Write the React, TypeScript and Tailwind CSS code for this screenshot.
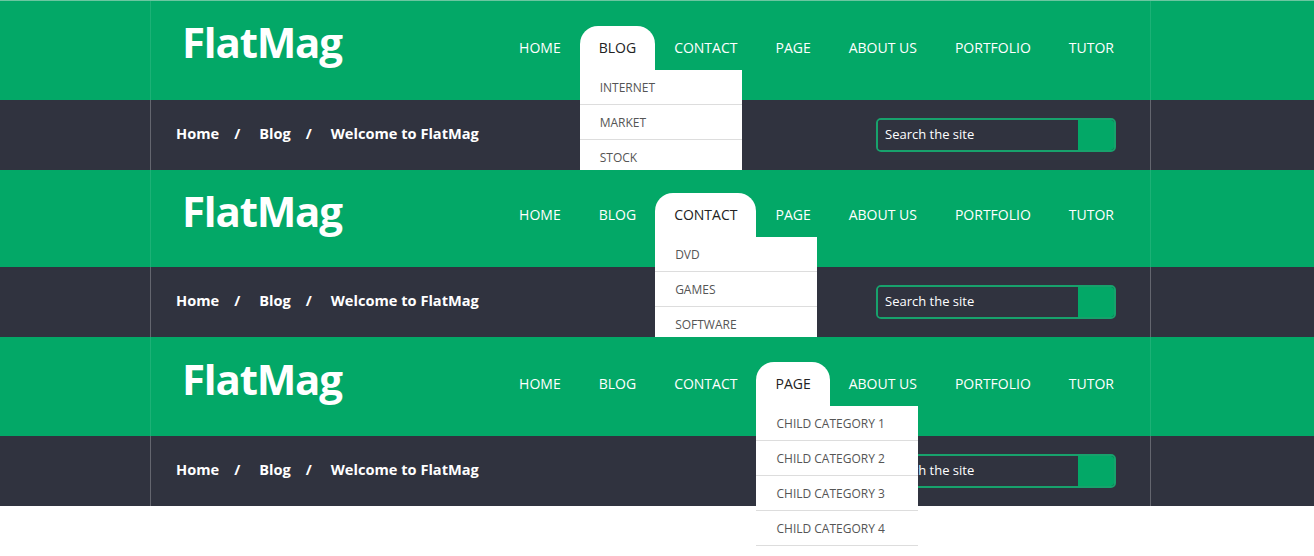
import React from "react";

const navItems = ['Home', 'Blog', 'Contact', 'Page', 'About us', 'Portfolio', 'Tutor']

interface HeaderProps {
    active: string
    subItems: string[]
    greenClass: string
    logoClass: string
    navClass: string
    clip: boolean
}

function Header({ active, subItems, greenClass, logoClass, navClass, clip }: HeaderProps) {
    return (
        <section className={`relative ${clip ? 'overflow-hidden' : ''}`}>
            <div className={`bg-[#03a867] ${greenClass}`}>
                <div className="ml-[150px] w-[1001px] h-full border-x border-white/10 flex items-start justify-between pl-[31px] pr-[17px]">
                    <a className={`text-[42px] leading-none font-bold tracking-[-1.2px] text-white ${logoClass}`}>FlatMag</a>
                    <nav className={`flex ${navClass}`}>
                        {navItems.map(item => (
                            <div key={item} className="relative">
                                <div className={`h-[44px] px-[19px] pb-[2px] flex items-center text-[14px] uppercase ${
                                    item === active
                                    ? 'bg-white text-[#222] rounded-t-[18px]'
                                    : 'text-white'
                                }`}>{item}</div>

                                {item === active && (
                                    <ul className="absolute top-full left-0 w-[162px] bg-white z-10">
                                        {subItems.map(sub => (
                                            <li key={sub} className="h-[35px] px-[20px] pt-[1px] flex items-center border-b border-[#dddddd] text-[12px] uppercase text-[#555]">
                                                {sub}
                                            </li>
                                        ))}
                                    </ul>
                                )}
                            </div>
                        ))}
                    </nav>
                </div>
            </div>

            <div className="bg-[#30333f] h-[70px]">
                <div className="ml-[150px] w-[1001px] h-full border-x border-white/25 flex items-center justify-between pl-[25px] pr-[34px]">
                    <div className="flex items-center mb-[3px] text-[14.6px] font-bold text-white">
                        <a>Home</a>
                        <span className="pl-[15px] pr-[19px]">/</span>
                        <a>Blog</a>
                        <span className="pl-[15px] pr-[19px]">/</span>
                        <span>Welcome to FlatMag</span>
                    </div>
                    <form className="flex w-[240px] h-[34px] rounded-[5px] border-2 border-[#17a26c] overflow-hidden">
                        <input
                            type="text"
                            placeholder="Search the site"
                            className="flex-1 min-w-0 bg-[#30333f] text-white text-[13px] pl-[7px] outline-none placeholder:text-white"
                        />
                        <button type="button" className="w-[36px] bg-[#03a867]"></button>
                    </form>
                </div>
            </div>
        </section>
    )
}

export default function App() {
    return (
        <div className="h-[556px] overflow-hidden bg-white font-['Open_Sans',sans-serif]">
            <div className="h-px bg-[#6cc6a0]"></div>
            <Header
                active="Blog"
                subItems={['Internet', 'Market', 'Stock']}
                greenClass="h-[99px]"
                logoClass="mt-[20px]"
                navClass="mt-[25px]"
                clip
            />
            <Header
                active="Contact"
                subItems={['DVD', 'Games', 'Software']}
                greenClass="h-[97px]"
                logoClass="mt-[20px]"
                navClass="mt-[23px]"
                clip
            />
            <Header
                active="Page"
                subItems={['Child Category 1', 'Child Category 2', 'Child Category 3', 'Child Category 4']}
                greenClass="h-[99px]"
                logoClass="mt-[21px]"
                navClass="mt-[25px]"
                clip={false}
            />
        </div>
    )
}
